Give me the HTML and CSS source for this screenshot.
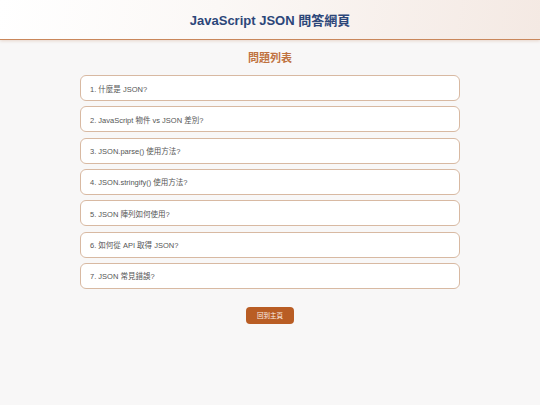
FILE: index.html
```html
<!DOCTYPE html>
<html lang="zh-Hant">
<head>
<meta charset="utf-8">
<title>JavaScript JSON 問答網頁</title>
<link rel="stylesheet" href="styles.css">
</head>
<body>
<header class="site-header">
  <h1 class="site-title">JavaScript JSON 問答網頁</h1>
</header>
<main class="content">
  <h2 class="section-title">問題列表</h2>
  <ul class="question-list">
    <li class="question-card">1. 什麼是 JSON?</li>
    <li class="question-card">2. JavaScript 物件 vs JSON 差別?</li>
    <li class="question-card">3. JSON.parse() 使用方法?</li>
    <li class="question-card">4. JSON.stringify() 使用方法?</li>
    <li class="question-card">5. JSON 陣列如何使用?</li>
    <li class="question-card">6. 如何從 API 取得 JSON?</li>
    <li class="question-card">7. JSON 常見錯誤?</li>
  </ul>
  <div class="actions">
    <a class="home-button" href="#">回到主頁</a>
  </div>
</main>
</body>
</html>
```

FILE: styles.css
```css
* { box-sizing: border-box; }

html, body {
  margin: 0;
  padding: 0;
}

body {
  background: #f8f7f7;
  font-family: "Liberation Sans", Arial, "Noto Sans CJK TC", sans-serif;
  width: 540px;
  height: 405px;
  overflow: hidden;
}

.site-header {
  height: 40px;
  background: linear-gradient(100deg, #ffffff 0%, #fbf8f6 40%, #f4e9e3 100%);
  border-bottom: 1px solid #c9875b;
  box-shadow: 0 1px 3px rgba(180, 120, 80, 0.25);
  display: flex;
  align-items: center;
  justify-content: center;
}

.site-title {
  margin: 0;
  font-size: 13px;
  font-weight: bold;
  color: #2c4679;
}

.content {
  display: flex;
  flex-direction: column;
  align-items: center;
  padding-top: 12px;
}

.section-title {
  margin: 0;
  font-size: 11px;
  line-height: 13px;
  font-weight: bold;
  color: #c0723f;
}

.question-list {
  list-style: none;
  margin: 10px 0 0;
  padding: 0;
  width: 380px;
  display: flex;
  flex-direction: column;
  gap: 5.33px;
}

.question-card {
  height: 26px;
  display: flex;
  align-items: center;
  padding: 0 9px;
  background: #ffffff;
  border: 1px solid #d8b9a2;
  border-radius: 6px;
  font-size: 7.5px;
  color: #555555;
}

.actions {
  margin-top: 18px;
  display: flex;
  justify-content: center;
}

.home-button {
  width: 48px;
  height: 17px;
  display: flex;
  align-items: center;
  justify-content: center;
  background: #b95d24;
  color: #fbeee5;
  border-radius: 4px;
  font-size: 6.5px;
  text-decoration: none;
}
```
